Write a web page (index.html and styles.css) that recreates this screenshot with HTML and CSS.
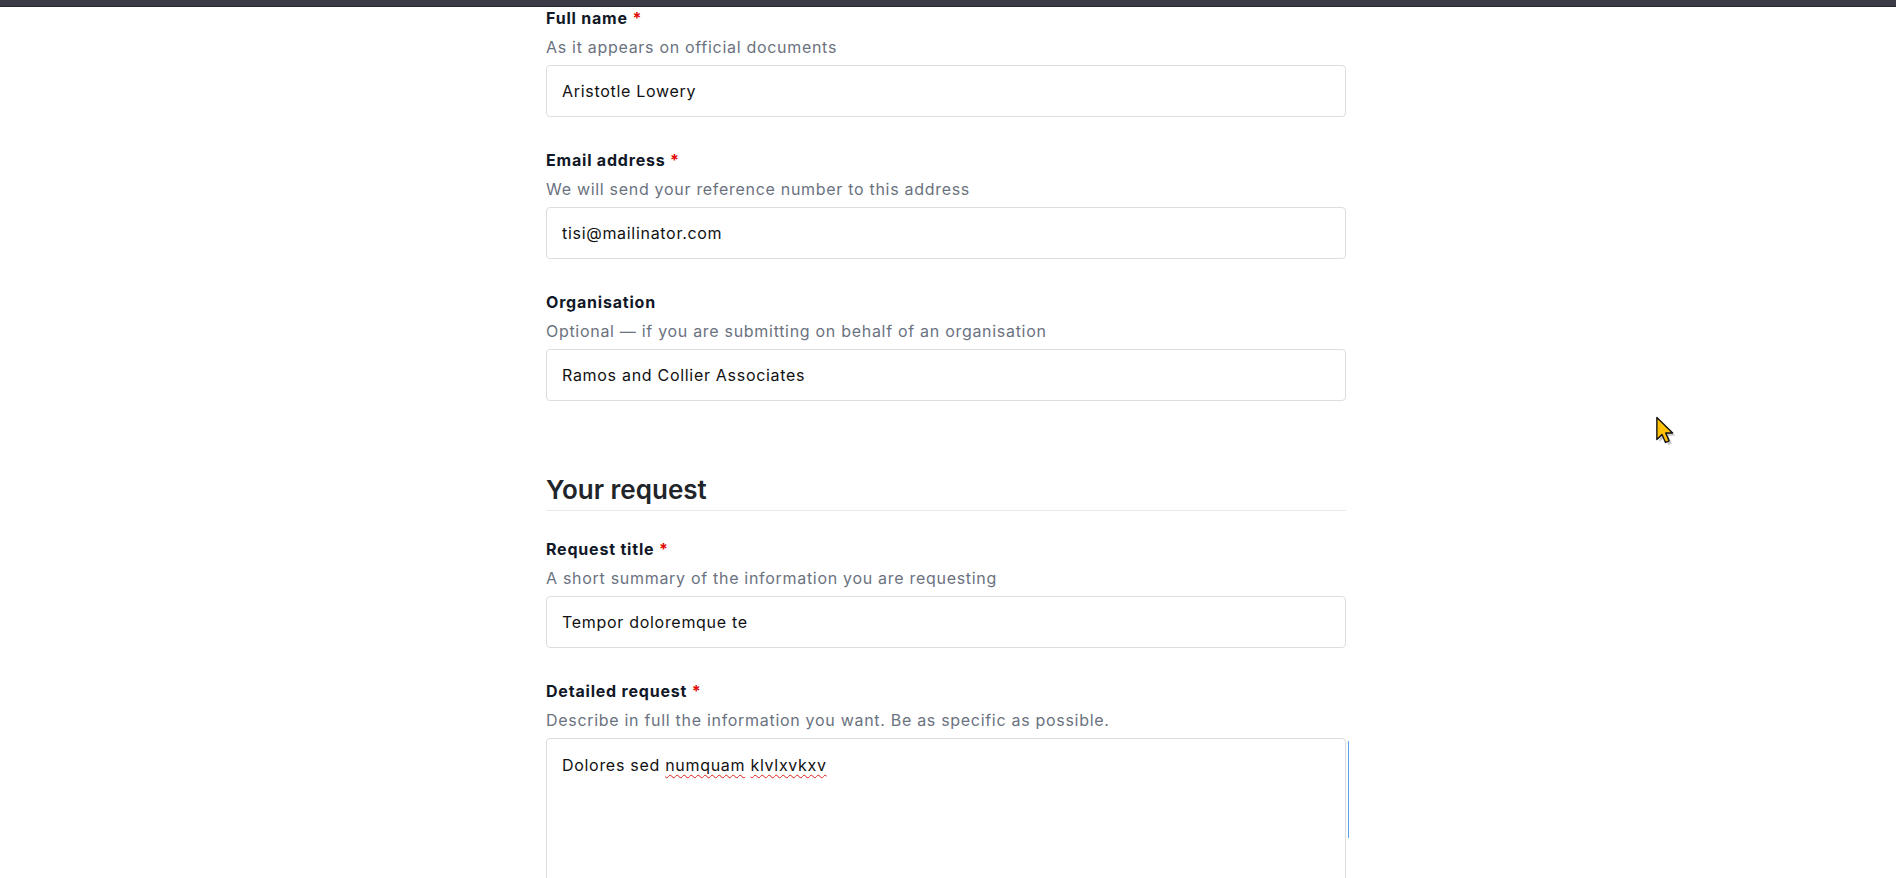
FILE: index.html
```html
<!DOCTYPE html>
<html lang="en">
<head>
<meta charset="utf-8">
<title>Request form</title>
<link rel="stylesheet" href="styles.css">
</head>
<body>
<div class="topbar"></div>
<main class="form">
  <div class="field">
    <label class="label" for="fullname">Full name <span class="req">*</span></label>
    <div class="hint">As it appears on official documents</div>
    <input class="input" id="fullname" type="text" value="Aristotle Lowery">
  </div>
  <div class="field">
    <label class="label" for="email">Email address <span class="req">*</span></label>
    <div class="hint">We will send your reference number to this address</div>
    <input class="input" id="email" type="text" value="tisi@mailinator.com">
  </div>
  <div class="field">
    <label class="label" for="org">Organisation</label>
    <div class="hint">Optional — if you are submitting on behalf of an organisation</div>
    <input class="input" id="org" type="text" value="Ramos and Collier Associates">
  </div>

  <section class="section">
    <h2 class="section-title">Your request</h2>
    <div class="field">
      <label class="label" for="title">Request title <span class="req">*</span></label>
      <div class="hint">A short summary of the information you are requesting</div>
      <input class="input" id="title" type="text" value="Tempor doloremque te">
    </div>
    <div class="field">
      <label class="label">Detailed request <span class="req">*</span></label>
      <div class="hint">Describe in full the information you want. Be as specific as possible.</div>
      <div class="textarea-wrap">
        <div class="textarea">Dolores sed <span class="spell">numquam</span> <span class="spell">klvlxvkxv</span></div>
        <div class="focus-line"></div>
      </div>
    </div>
  </section>
</main>
<svg class="cursor" width="24" height="32" viewBox="0 0 22 30" aria-hidden="true">
  <path d="M2.5 2.5 L2.5 23 L7.3 18.3 L10.6 25.8 L14 24.3 L10.8 17 L17.3 17 Z" fill="rgba(0,0,0,0.22)" transform="translate(1.5,1.5)"/>
  <path d="M1.5 1.5 L1.5 22 L6.3 17.3 L9.6 24.8 L13 23.3 L9.8 16 L16.3 16 Z" fill="#ffc107" stroke="#111" stroke-width="1.3" stroke-linejoin="round"/>
</svg>
</body>
</html>
```
FILE: styles.css
```css
html, body {
  margin: 0;
  padding: 0;
  overflow: hidden;
  background: #ffffff;
}

body {
  font-family: Inter, "Noto Sans", "Liberation Sans", sans-serif;
  color: #111827;
}

.topbar {
  position: fixed;
  top: 0;
  left: 0;
  right: 0;
  height: 6px;
  background: #3b3b46;
  border-bottom: 1px solid #29252d;
  z-index: 5;
}

.form {
  width: 800px;
  padding: 6px 4px 0 0;
  margin: 0 auto;
}

.field {
  margin-bottom: 31px;
}

.label {
  display: block;
  font-size: 16px;
  line-height: 24px;
  font-weight: 700;
  letter-spacing: 0.8px;
  color: #111827;
  margin-bottom: 5px;
}

.req {
  color: #e10600;
}

.hint {
  font-size: 16px;
  line-height: 24px;
  letter-spacing: 0.7px;
  color: #6b7280;
  margin-bottom: 6px;
}

.input {
  display: block;
  box-sizing: border-box;
  width: 100%;
  height: 52px;
  margin: 0;
  padding: 12px 15px;
  border: 1px solid #dcdde1;
  border-radius: 4px;
  background: #fff;
  font-family: Inter, "Noto Sans", "Liberation Sans", sans-serif;
  font-size: 16px;
  line-height: 26px;
  letter-spacing: 0.7px;
  color: #111111;
  outline: none;
}

.section {
  padding-top: 42px;
}

.section-title {
  margin: 0 0 26px;
  padding-bottom: 5px;
  border-bottom: 1px solid #e8e9ec;
  font-size: 26px;
  line-height: 31px;
  font-weight: 600;
  color: #212529;
}

.textarea-wrap {
  position: relative;
}

.textarea {
  box-sizing: border-box;
  width: 100%;
  height: 220px;
  padding: 13px 15px;
  border: 1px solid #dcdde1;
  border-radius: 4px;
  font-size: 16px;
  line-height: 26px;
  letter-spacing: 0.7px;
  color: #111111;
}

.spell {
  text-decoration: underline wavy #e0201a;
  text-decoration-thickness: 1px;
  text-underline-offset: 3px;
}

.focus-line {
  position: absolute;
  top: 3px;
  left: 802px;
  width: 1px;
  height: 97px;
  background: #5aa2f0;
}

.cursor {
  position: absolute;
  left: 1655px;
  top: 416px;
}
```
